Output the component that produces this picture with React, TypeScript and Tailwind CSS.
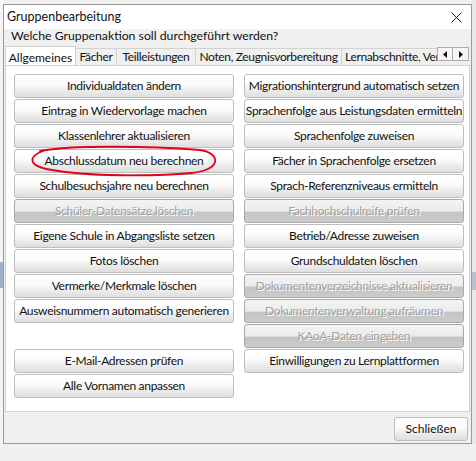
import React from "react";

type Action = { label: string; disabled?: boolean } | null;

// Zeilen der Aktions-Buttons: [links, rechts]
const rows: [Action, Action][] = [
  [{ label: "Individualdaten ändern" }, { label: "Migrationshintergrund automatisch setzen" }],
  [{ label: "Eintrag in Wiedervorlage machen" }, { label: "Sprachenfolge aus Leistungsdaten ermitteln" }],
  [{ label: "Klassenlehrer aktualisieren" }, { label: "Sprachenfolge zuweisen" }],
  [{ label: "Abschlussdatum neu berechnen" }, { label: "Fächer in Sprachenfolge ersetzen" }],
  [{ label: "Schulbesuchsjahre neu berechnen" }, { label: "Sprach-Referenzniveaus ermitteln" }],
  [{ label: "Schüler-Datensätze löschen", disabled: true }, { label: "Fachhochschulreife prüfen", disabled: true }],
  [{ label: "Eigene Schule in Abgangsliste setzen" }, { label: "Betrieb/Adresse zuweisen" }],
  [{ label: "Fotos löschen" }, { label: "Grundschuldaten löschen" }],
  [{ label: "Vermerke/Merkmale löschen" }, { label: "Dokumentenverzeichnisse aktualisieren", disabled: true }],
  [{ label: "Ausweisnummern automatisch generieren" }, { label: "Dokumentenverwaltung aufräumen", disabled: true }],
  [null, { label: "KAoA-Daten eingeben", disabled: true }],
  [{ label: "E-Mail-Adressen prüfen" }, { label: "Einwilligungen zu Lernplattformen" }],
  [{ label: "Alle Vornamen anpassen" }, null],
];

const tabs = [
  { label: "Fächer", w: "w-[41px]" },
  { label: "Teilleistungen", w: "w-[79px]" },
  { label: "Noten, Zeugnisvorbereitung", w: "w-[146px]" },
  { label: "Lernabschnitte, Versetzung", w: "w-[140px]" },
];

const ActionButton = ({ action }: { action: Action }) => {
  if (!action) return <div className="h-[24px]" />;
  if (action.disabled) {
    return (
      <button
        disabled
        className="h-[24px] w-full rounded-[3px] border border-[#a8a8a8] bg-[linear-gradient(to_bottom,#f3f3f3_0%,#ececec_50%,#c4c4c4_56%,#cbcbcb_100%)] text-[12px] tracking-[-0.3px] leading-none text-[#a2a2a2] [text-shadow:1px_1px_0_#ffffff] whitespace-nowrap overflow-hidden"
      >
        {action.label}
      </button>
    );
  }
  return (
    <button className="h-[24px] w-full rounded-[3px] border border-[#bdbdbd] bg-[linear-gradient(to_bottom,#ffffff_0%,#fbfbfb_45%,#ececec_70%,#dedede_100%)] text-[12px] tracking-[-0.3px] leading-none text-[#111111] whitespace-nowrap overflow-hidden">
      {action.label}
    </button>
  );
};

export default function App() {
  return (
    <div className="relative w-[476px] h-[461px] overflow-hidden bg-[#f0f0f0] font-['Lato','Liberation_Sans',sans-serif] text-[#111111]">
      <div className="flex h-[444px]">
        {/* Hintergrund links */}
        <div className="w-[3px] flex flex-col bg-[#f4f4f4]">
          <div className="h-[262px]" />
          <div className="h-[26px] bg-[#9fb3c8]" />
        </div>

        {/* Dialog */}
        <div className="mt-[4px] w-[469px] h-[440px] border border-[#9a9a9a] bg-[#f0f0f0] flex flex-col">
          <div className="h-[24px] bg-white flex items-center justify-between pl-[3px] pr-[9px]">
            <span className="text-[12.5px] leading-none">Gruppenbearbeitung</span>
            <svg width="11" height="11" viewBox="0 0 11 11" className="text-[#222]">
              <path d="M0.5 0.5 L10.5 10.5 M10.5 0.5 L0.5 10.5" stroke="currentColor" strokeWidth="1" fill="none" />
            </svg>
          </div>

          <div className="h-[15px] flex items-center pl-[7px]">
            <span className="text-[12.25px] leading-none">Welche Gruppenaktion soll durchgeführt werden?</span>
          </div>

          {/* Reiter */}
          <div className="h-[21px] flex pl-[1px]">
            <div className="flex-1 flex items-end overflow-hidden">
              <div className="relative z-10 -mb-px h-[20px] w-[71px] shrink-0 border border-b-0 border-[#d2d2d2] bg-white flex items-start justify-center pt-[2px] text-[12px]">
                Allgemeines
              </div>
              {tabs.map((t) => (
                <div
                  key={t.label}
                  className={`${t.w} h-[17px] shrink-0 border border-b-0 border-l-0 border-[#d2d2d2] bg-[#f0f0f0] flex items-center justify-center text-[12px] tracking-[-0.35px] whitespace-nowrap overflow-hidden`}
                >
                  {t.label}
                </div>
              ))}
            </div>
            <div className="mt-[3px] flex h-[14px] mr-[2px]">
              <div className="w-[16px] h-[14px] border border-[#acacac] bg-[#f5f5f5] flex items-center justify-center">
                <svg width="4" height="7" viewBox="0 0 4 7"><path d="M4 0 L0 3.5 L4 7 Z" fill="#111" /></svg>
              </div>
              <div className="w-[16px] h-[14px] border border-l-0 border-[#acacac] bg-[#f5f5f5] flex items-center justify-center">
                <svg width="4" height="7" viewBox="0 0 4 7"><path d="M0 0 L4 3.5 L0 7 Z" fill="#111" /></svg>
              </div>
            </div>
          </div>

          {/* Reiterinhalt */}
          <div className="ml-[1px] w-[465px] h-[347px] border border-[#d2d2d2] bg-white pl-[8px] pt-[8px]">
            <div className="grid grid-cols-[220px_220px] gap-x-[10px] gap-y-[1px]">
              {rows.map(([l, r], i) => (
                <React.Fragment key={i}>
                  <ActionButton action={l} />
                  <ActionButton action={r} />
                </React.Fragment>
              ))}
            </div>
          </div>

          <div className="flex-1 flex justify-end items-start pt-[5px] pr-[3px]">
            <button className="h-[24px] w-[74px] rounded-[3px] border border-[#bdbdbd] bg-[linear-gradient(to_bottom,#ffffff_0%,#fbfbfb_45%,#ececec_70%,#dedede_100%)] text-[12px] leading-none">
              Schließen
            </button>
          </div>
        </div>

        {/* Hintergrund rechts */}
        <div className="flex-1 flex flex-col bg-[#e9e9e9]">
          <div className="h-[272px]" />
          <div className="h-[18px] bg-[#b7c3d0]" />
        </div>
      </div>

      {/* rote Markierung */}
      <svg className="absolute inset-0 pointer-events-none" width="476" height="461" viewBox="0 0 476 461">
        <path
          d="M40 151 C70 145 150 146 200 150 C221 153 222 170 192 173 C150 177 85 176 52 170 C27 166 27 156 46 150"
          stroke="#e3001b"
          strokeWidth="1.8"
          fill="none"
          strokeLinecap="round"
        />
      </svg>
    </div>
  );
}
